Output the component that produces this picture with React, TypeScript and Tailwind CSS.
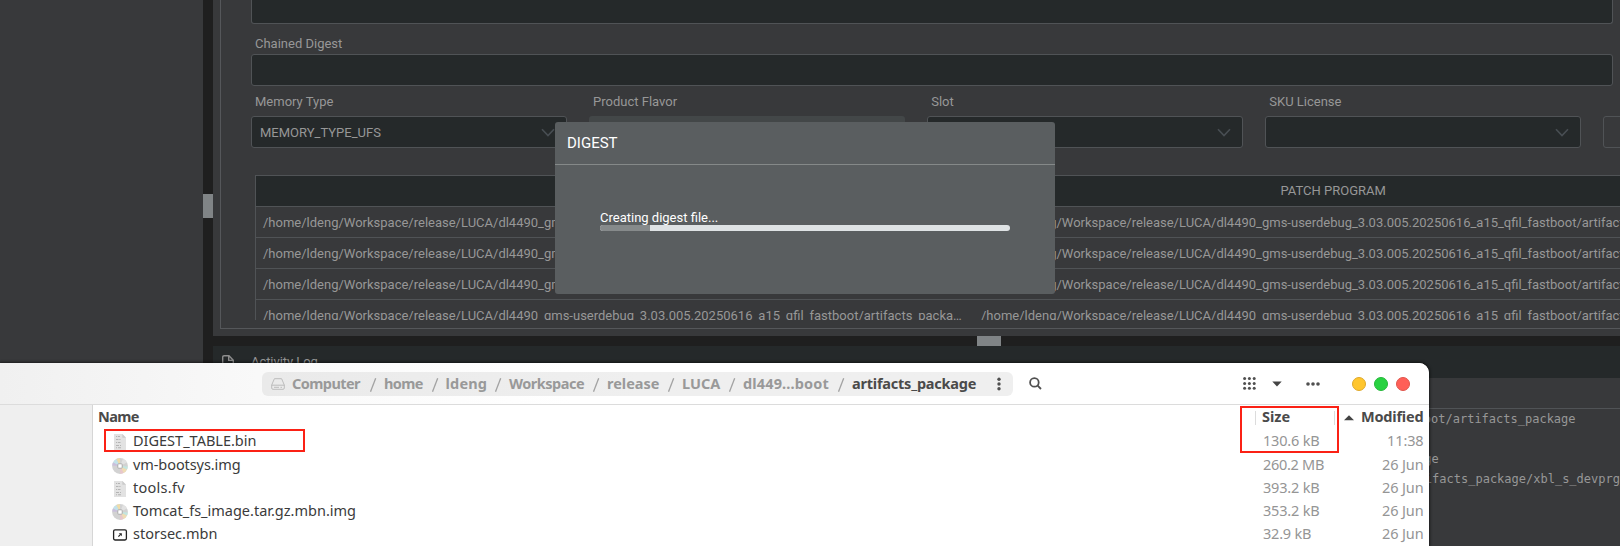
import type { ReactNode } from "react";

const PATH =
  "/home/ldeng/Workspace/release/LUCA/dl4490_gms-userdebug_3.03.005.20250616_a15_qfil_fastboot/artifacts_package/rawprogram.xml";

const UI = "font-['Noto_Sans',sans-serif] text-[14.5px] leading-[23px] whitespace-nowrap";

function Chevron() {
  return (
    <svg width="14" height="9" viewBox="0 0 14 9" fill="none" stroke="#484e53" strokeWidth="1.6">
      <path d="M1 1.2 L7 7.6 L13 1.2" />
    </svg>
  );
}

function Field({ label, value, disabled = false }: { label: string; value?: string; disabled?: boolean }) {
  return (
    <div className="w-[315.6px] shrink-0">
      <div className="h-[30px] pl-1 leading-[32px]">{label}</div>
      <div
        className={
          disabled
            ? "flex h-8 items-center justify-between rounded-[3px] bg-[#434748] pl-2 pr-[11px]"
            : "flex h-8 items-center justify-between rounded-[3px] border border-[#505356] bg-[#25292a] pl-2 pr-[11px]"
        }
      >
        <span className="pt-[2px]">{value}</span>
        {!disabled && <Chevron />}
      </div>
    </div>
  );
}

function TableRow() {
  return (
    <div className="flex h-[31px] border-b border-[#505356] leading-[31px]">
      <div className="w-[718px] shrink-0 truncate pl-[7px] pr-1.5">{PATH}</div>
      <div className="w-[718px] shrink-0 truncate pl-[7px] pr-1.5">{PATH}</div>
    </div>
  );
}

function DocIcon() {
  return (
    <svg width="12" height="16" viewBox="0 0 12 16">
      <path d="M0 0H8.5L12 3.5V16H0Z" fill="#e2e2e2" />
      <path d="M8.3 0V3.7H12Z" fill="#cbcbcb" />
      <path
        d="M2 2.5H3.2M4 2.5H6M2 5.5H4.5M5.3 5.5H6.5M2 8.5H3M3.8 8.5H6.5M2 11.5H5M6 11.5H7M2 13.7H3M4 13.7H7"
        stroke="#b4b4b4"
        strokeWidth="1.1"
      />
    </svg>
  );
}

function DiscIcon() {
  return (
    <svg width="16" height="16" viewBox="0 0 16 16">
      <circle cx="8" cy="8" r="7.9" fill="#d2d2d2" />
      <path d="M8 8L1 4.6A8 8 0 0 1 4.5 1Z" fill="#c3e2ea" />
      <path d="M8 8L4.5 1A8 8 0 0 1 8 .2Z" fill="#efdca8" />
      <path d="M8 8L.3 7.5A8 8 0 0 1 1 4.6Z" fill="#c9bfdc" />
      <path d="M8 8L15 11.4A8 8 0 0 1 11.5 15Z" fill="#efdcb4" />
      <path d="M8 8L11.5 15A8 8 0 0 1 8.3 15.8Z" fill="#e9c6cb" />
      <path d="M8 8L15.7 8.5A8 8 0 0 1 15 11.4Z" fill="#c3e6df" />
      <path d="M8 8L11 .8A8 8 0 0 1 15 4.5Z" fill="#e2e2e2" />
      <circle cx="8" cy="8" r="3" fill="#b4b4b4" />
      <circle cx="8" cy="8" r="2.2" fill="#e8e8e8" />
      <circle cx="8" cy="8" r="1.2" fill="#fff" />
    </svg>
  );
}

function BinaryIcon() {
  return (
    <svg width="16" height="12" viewBox="0 0 16 12" fill="none">
      <rect x="1.6" y=".8" width="12.8" height="10.2" rx="1.4" stroke="#222" strokeWidth="1.3" />
      <path d="M6.4 7.6L8.6 5.4" stroke="#222" strokeWidth="1.2" />
      <path d="M6.8 4.3H9.8V7.3Z" fill="#222" />
    </svg>
  );
}

function FileRow({ icon, name, nameClass, size, sizeClass, date }: {
  icon: ReactNode;
  name: string;
  nameClass: string;
  size: string;
  sizeClass: string;
  date: string;
}) {
  return (
    <div className="flex h-[23px] items-center [&>span]:-mt-0.5">
      <div className="ml-[19px] flex w-4 justify-center">{icon}</div>
      <span className={`ml-[5px] w-[1130px] text-[#3b3b3b] ${nameClass}`}>{name}</span>
      <span className={`w-[92px] text-[#959595] ${sizeClass}`}>{size}</span>
      <span className="w-[68.5px] text-right tracking-[-0.12px] text-[#959595]">{date}</span>
    </div>
  );
}

function Slash() {
  return (
    <svg className="shrink-0" width="22" height="24" viewBox="0 0 22 24">
      <path d="M8.5 19.7L13.7 6.2" stroke="#a2a2a2" strokeWidth="1.3" />
    </svg>
  );
}

function FileWindow() {
  return (
    <div className={`absolute left-0 top-[363px] flex h-[183px] w-[1429px] flex-col overflow-hidden rounded-tr-[10px] bg-white shadow-[0_0_3px_1px_rgba(0,0,0,0.55)] ${UI}`}>
      <div className="flex h-[42px] shrink-0 items-center border-b border-[#dcdcdc] bg-gradient-to-r from-[#f0f0f0] via-[#fafafa] via-20% to-white to-40% font-bold text-[#999]">
        <div className="ml-[262px] flex h-6 w-[751px] shrink-0 items-center rounded-md bg-gradient-to-r from-[#eaeaea] to-[#efefef] to-50% leading-6 [&>span]:-mt-0.5">
          <svg className="ml-[9px] mr-[7px] shrink-0" width="14" height="12" viewBox="0 0 14 12" fill="none" stroke="#bcbcbc">
            <path d="M3.4 .7H10.6L13.3 7V10Q13.3 11.3 12 11.3H2Q.7 11.3 .7 10V7ZM.7 7.2H13.3" />
            <path d="M3 9.3H8M9.5 9.3H11" />
          </svg>
          <span className="w-[70px] shrink-0 tracking-[-0.57px]">Computer</span>
          <Slash />
          <span className="w-[39.5px] shrink-0 tracking-[-0.6px]">home</span>
          <Slash />
          <span className="w-[41.5px] shrink-0 tracking-[0.2px]">ldeng</span>
          <Slash />
          <span className="w-[76px] shrink-0 tracking-[-0.5px]">Workspace</span>
          <Slash />
          <span className="w-[53px] shrink-0">release</span>
          <Slash />
          <span className="w-[38.5px] shrink-0">LUCA</span>
          <Slash />
          <span className="w-[87.5px] shrink-0 pl-[0.5px] tracking-[0.14px]">dl449...boot</span>
          <Slash />
          <span className="w-[124.5px] shrink-0 tracking-[-0.22px] text-[#4a4a4a]">artifacts_package</span>
          <svg className="ml-[20px]" width="4" height="14" viewBox="0 0 4 14" fill="#505050">
            <circle cx="2" cy="2.2" r="1.7" />
            <circle cx="2" cy="7" r="1.7" />
            <circle cx="2" cy="11.8" r="1.7" />
          </svg>
        </div>
        <svg className="ml-4" width="13" height="13" viewBox="0 0 13 13" fill="none" stroke="#505050" strokeWidth="1.8">
          <circle cx="5.4" cy="5.4" r="4.3" />
          <path d="M8.4 8.4L12 12" />
        </svg>
        <svg className="ml-[200.5px]" width="13" height="13" viewBox="0 0 13 13" fill="#505050">
          {[1.6, 6.4, 11.2].map((y) => [1.6, 6.4, 11.2].map((x) => <circle key={`${x}-${y}`} cx={x} cy={y} r="1.5" />))}
        </svg>
        <svg className="ml-4" width="10" height="6" viewBox="0 0 10 6" fill="#444">
          <path d="M.3 .5H9.7L5 5.5Z" />
        </svg>
        <svg className="ml-6" width="14" height="4" viewBox="0 0 14 4" fill="#505050">
          <circle cx="2" cy="2" r="1.8" />
          <circle cx="7" cy="2" r="1.8" />
          <circle cx="12" cy="2" r="1.8" />
        </svg>
        <div className="ml-8 flex gap-2">
          <div className="size-3.5 rounded-full border border-[#dfa92a] bg-[#ffc62e]" />
          <div className="size-3.5 rounded-full border border-[#25b83a] bg-[#28d241]" />
          <div className="size-3.5 rounded-full border border-[#e0554b] bg-[#ff5f57]" />
        </div>
      </div>
      <div className="flex grow">
        <div className="w-[93px] shrink-0 border-r border-[#d6d6d6] bg-[#efefef]" />
        <div className="grow">
          <div className="flex h-[25px] items-center font-bold text-[#4a4a4a] [&>span]:-mt-0.5">
            <span className="ml-[5px] w-[1157px] shrink-0 tracking-[-0.6px]">Name</span>
            <div className="h-[14px] w-px bg-[#dcdcdc]" />
            <span className="ml-1.5 w-[72px] shrink-0">Size</span>
            <div className="h-[14px] w-px bg-[#dcdcdc]" />
            <svg className="ml-[9px]" width="10" height="6" viewBox="0 0 10 6" fill="#444">
              <path d="M0 5.3H10L5 .3Z" />
            </svg>
            <span className="ml-[7px] shrink-0 tracking-[-0.2px]">Modified</span>
          </div>
          <div className="h-[24px]">
            <FileRow icon={<DocIcon />} name="DIGEST_TABLE.bin" nameClass="" size="130.6 kB" sizeClass="tracking-[-0.2px]" date="11:38" />
          </div>
          <FileRow icon={<DiscIcon />} name="vm-bootsys.img" nameClass="tracking-[-0.08px]" size="260.2 MB" sizeClass="tracking-[-0.3px]" date="26 Jun" />
          <FileRow icon={<DocIcon />} name="tools.fv" nameClass="tracking-[0.27px]" size="393.2 kB" sizeClass="tracking-[-0.2px]" date="26 Jun" />
          <FileRow icon={<DiscIcon />} name="Tomcat_fs_image.tar.gz.mbn.img" nameClass="" size="353.2 kB" sizeClass="tracking-[-0.2px]" date="26 Jun" />
          <FileRow icon={<BinaryIcon />} name="storsec.mbn" nameClass="" size="32.9 kB" sizeClass="tracking-[-0.2px]" date="26 Jun" />
        </div>
      </div>
    </div>
  );
}

export default function App() {
  return (
    <div className="relative flex h-[546px] w-[1620px] overflow-hidden bg-[#1f1f1f] font-[Roboto,sans-serif] text-[13px] text-[#979797]">
      <div className="w-[203px] shrink-0 bg-[#38393b]" />
      <div className="w-[10px] shrink-0 pt-[194px]">
        <div className="h-6 bg-[#808486]" />
      </div>
      <div className="flex w-[1407px] shrink-0 flex-col overflow-hidden">
        <div className="h-[336px] shrink-0 overflow-hidden bg-[#38393b] pl-[7px]">
          <div className="h-[329px] w-[1500px] border-b border-l border-[#55575a] pl-[30px]">
            <div className="h-6 w-[1362px] rounded-b-[3px] border border-t-0 border-[#505356] bg-[#25292a]" />
            <div className="h-[30px] pl-1 leading-[39px]">Chained Digest</div>
            <div className="h-8 w-[1362px] rounded-[3px] border border-[#505356] bg-[#25292a]" />
            <div className="flex gap-[22.5px]">
              <Field label="Memory Type" value="MEMORY_TYPE_UFS" />
              <Field label="Product Flavor" disabled />
              <Field label="Slot" />
              <Field label="SKU License" />
              <div className="mt-[30px] h-8 w-[316px] shrink-0 rounded-[3px] border border-[#505356]" />
            </div>
            <div className="ml-1 mt-[27px] h-[145px] w-[1436px] overflow-hidden border-l border-t border-[#505356]">
              <div className="flex h-[31px] border-b border-[#505356] bg-[#25292a] text-center leading-[30px]">
                <div className="w-[718px]">RAW PROGRAM</div>
                <div className="w-[718px] pl-[2px]">PATCH PROGRAM</div>
              </div>
              <TableRow />
              <TableRow />
              <TableRow />
              <TableRow />
            </div>
          </div>
        </div>
        <div className="h-[10px] shrink-0 pl-[764px]">
          <div className="h-full w-6 bg-[#808486]" />
        </div>
        <div className="flex h-8 shrink-0 items-center bg-[#25292a] pl-[9px]">
          <svg width="12" height="15" viewBox="0 0 12 15" fill="none" stroke="#8d8d8d" strokeWidth="1.4">
            <path d="M7 .7H2.2Q.7 .7 .7 2.2V12.8Q.7 14.3 2.2 14.3H9.8Q11.3 14.3 11.3 12.8V5.2ZM6.7 .9V5.4H11.2" />
          </svg>
          <span className="ml-[17px] tracking-[-0.06px]">Activity Log</span>
        </div>
        <div className="grow bg-[#38393b]">
          <div className="h-[31px] border-b border-[#505356]" />
          <div className="pl-[1174px] font-['DejaVu_Sans_Mono',monospace] text-[12px] leading-[20px] whitespace-pre">
            <div className="pl-[0.7px]">fastboot/artifacts_package</div>
            <div> </div>
            <div className="-ml-[71px]">artifacts_package</div>
            <div className="pl-[16.2px]">artifacts_package/xbl_s_devprg_ns.melf</div>
          </div>
        </div>
      </div>

      <div className="absolute left-[555px] top-[122px] flex h-[172px] w-[500px] flex-col rounded-[3px] bg-[#5a5e60] text-white">
        <div className="h-[43px] border-b border-[#858989] pl-3 text-[15px] leading-[42px]">DIGEST</div>
        <div className="px-[45px] pt-[44px]">
          <div className="h-4 leading-[17px]">Creating digest file...</div>
          <div className="h-1.5 overflow-hidden rounded-[3px] bg-[#dee2e4]">
            <div className="h-full w-[50px] bg-[#868a8b]" />
          </div>
        </div>
      </div>

      <FileWindow />
      <div className="absolute left-[104px] top-[429px] h-[23px] w-[201px] border-2 border-[#fb2115]" />
      <div className="absolute left-[1240px] top-[406px] h-[47px] w-[99px] border-2 border-[#fb2115]" />
    </div>
  );
}
